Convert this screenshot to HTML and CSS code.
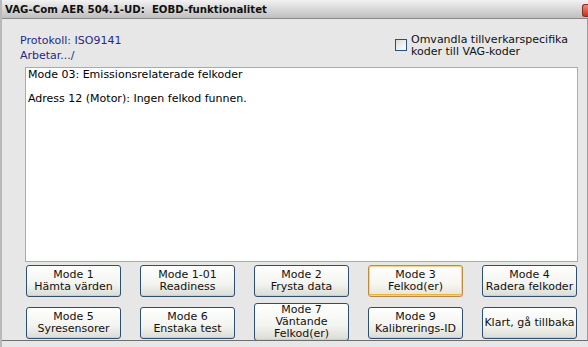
FILE: index.html
```html
<!DOCTYPE html>
<html lang="sv">

<head>
    <meta charset="UTF-8" />
    <meta name="viewport" content="width=device-width, initial-scale=1.0" />
    <title>VAG-Com AER 504.1-UD: EOBD-funktionalitet</title>
    <link rel="stylesheet" href="styles.css">
</head>

<body>
    <div class="fonster">
        <div class="titelrad">
            <span class="titel">VAG-Com AER 504.1-UD:&nbsp; EOBD-funktionalitet</span>
            <span class="stang"></span>
        </div>

        <div class="innehall">
            <div class="topp">
                <div class="status">
                    <div>Protokoll: ISO9141</div>
                    <div>Arbetar.../</div>
                </div>
                <label class="val">
                    <span class="ruta"></span>
                    <span>Omvandla tillverkarspecifika<br>koder till VAG-koder</span>
                </label>
            </div>

            <div class="logg">
                <div>Mode 03: Emissionsrelaterade felkoder</div>
                <div>&nbsp;</div>
                <div>Adress 12 (Motor): Ingen felkod funnen.</div>
            </div>

            <div class="knappar">
                <button class="knapp">Mode 1<br>Hämta värden</button>
                <button class="knapp">Mode 1-01<br>Readiness</button>
                <button class="knapp">Mode 2<br>Frysta data</button>
                <button class="knapp aktiv">Mode 3<br>Felkod(er)</button>
                <button class="knapp">Mode 4<br>Radera felkoder</button>
                <button class="knapp">Mode 5<br>Syresensorer</button>
                <button class="knapp">Mode 6<br>Enstaka test</button>
                <button class="knapp hog">Mode 7<br>Väntande<br>Felkod(er)</button>
                <button class="knapp">Mode 9<br>Kalibrerings-ID</button>
                <button class="knapp">Klart, gå tillbaka</button>
            </div>
        </div>
    </div>
</body>

</html>
```

FILE: styles.css
```css
* {
    box-sizing: border-box;
}

body {
    margin: 0;
    background: #d4d4d4;
    font-family: "DejaVu Sans", Verdana, sans-serif;
    font-size: 11px;
    color: #000;
}

.fonster {
    width: 588px;
    height: 347px;
    overflow: hidden;
    background: #e7e7e7;
    border-left: 2px solid #b9b9b9;
}

.titelrad {
    height: 19px;
    display: flex;
    align-items: center;
    justify-content: space-between;
    padding-left: 3px;
    background: linear-gradient(to bottom, #f2f2f2, #d8d8d8 50%, #bfbfbf);
    border-bottom: 1px solid #8a8a8a;
}

.titel {
    font-weight: bold;
    font-size: 10.2px;
    color: #111;
}

.stang {
    width: 6px;
    height: 13px;
    margin-top: 2px;
    border-radius: 3px 0 0 3px;
    background: linear-gradient(to bottom, #f08a7a, #c9321f);
    border: 1px solid #8c2a20;
    border-right: none;
}

.innehall {
    height: 322px;
    overflow: hidden;
    padding: 13px 9px 0 18px;
    border-bottom: 1px solid #6e6e6e;
    border-right: 1px solid #9a9a9a;
}

.topp {
    display: flex;
    justify-content: space-between;
    height: 35px;
}

.status {
    color: #1f2a86;
    line-height: 15px;
    padding-top: 1px;
}

.val {
    display: flex;
    align-items: flex-start;
    gap: 4px;
    width: 175px;
    margin-right: 8px;
    padding-top: 2px;
    line-height: 12px;
    color: #111;
}

.ruta {
    flex: none;
    width: 12px;
    height: 12px;
    margin-top: 5px;
    border: 1px solid #25508a;
    background: linear-gradient(135deg, #dcdcd6, #ffffff);
}

.logg {
    height: 195px;
    margin: 0 0 3px 5px;
    padding: 1px 2px;
    background: #fff;
    border: 1px solid #a5acb5;
    line-height: 12px;
}

.knappar {
    display: grid;
    grid-template-columns: repeat(5, 95px);
    grid-template-rows: 32px 32px;
    column-gap: 19px;
    row-gap: 10px;
    margin-left: 6px;
    align-items: center;
}

.knapp {
    height: 32px;
    padding: 0;
    font-family: inherit;
    font-size: 11px;
    line-height: 12px;
    color: #111;
    border: 1px solid #2f4f6f;
    border-radius: 3px;
    background: linear-gradient(to bottom, #ffffff, #f3f3ef 60%, #dcdcd6);
    box-shadow: inset 0 -1px 0 #cfcfc8;
}

.knapp.aktiv {
    border-color: #c08a3c;
    box-shadow: inset 0 0 0 1px #f8d088, inset 0 -2px 0 #f0b040;
    background: linear-gradient(to bottom, #ffffff, #f7f6f0 60%, #e4e3dc);
}

.knapp.hog {
    align-self: start;
    height: 38px;
    margin-top: -4px;
}
```
